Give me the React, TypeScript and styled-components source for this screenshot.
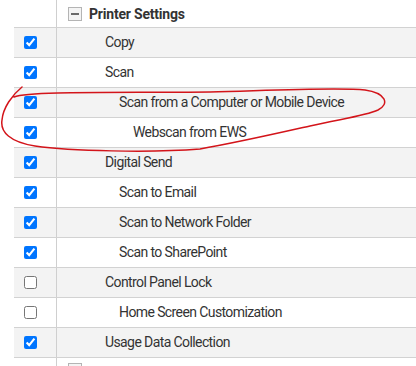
import React from "react";
import styled, { createGlobalStyle } from "styled-components";

const GlobalStyle = createGlobalStyle`
  html, body {
    margin: 0;
    padding: 0;
    overflow: hidden;
    background: #ffffff;
  }
  body {
    font-family: Roboto, "Liberation Sans", Arial, sans-serif;
    color: #333333;
  }
`;

const Page = styled.div`
  position: relative;
  width: 416px;
  height: 366px;
  overflow: hidden;
`;

const Table = styled.div`
  margin-left: 14px;
  display: flex;
  flex-direction: column;
`;

const Row = styled.div<{ $shade?: boolean; $h?: number }>`
  display: grid;
  grid-template-columns: 43px 1fr;
  height: ${(p) => p.$h ?? 29}px;
  border-bottom: 1px solid #d2d2d2;
  background: ${(p) => (p.$shade ? "#f3f3f3" : "#ffffff")};
`;

const CheckCell = styled.div`
  display: flex;
  align-items: center;
  padding-left: 10px;
  border-right: 1px solid #cfcfcf;
`;

const Check = styled.input`
  width: 13px;
  height: 13px;
  margin: 0;
`;

const LabelCell = styled.div<{ $level: number }>`
  display: flex;
  align-items: center;
  padding-left: ${(p) => 34 + p.$level * 14}px;
  padding-bottom: 1px;
  font-size: 14px;
  letter-spacing: -0.6px;
  white-space: nowrap;
`;

const HeaderCell = styled.div<{ $top?: number }>`
  display: flex;
  align-items: ${(p) => (p.$top !== undefined ? "flex-start" : "center")};
  padding-top: ${(p) => p.$top ?? 0}px;
  padding-left: 11px;
  gap: 7px;
  font-size: 14px;
  font-weight: 700;
  letter-spacing: -0.2px;
  white-space: nowrap;
`;

const ToggleBox = styled.span`
  box-sizing: border-box;
  width: 14px;
  height: 14px;
  border: 1px solid #b4b4b4;
  background: #f4f4f4;
  display: flex;
  align-items: center;
  justify-content: center;
  flex-shrink: 0;
  &::after {
    content: "";
    width: 8px;
    height: 2px;
    background: #6a6a6a;
  }
`;

const Annotation = styled.svg`
  position: absolute;
  left: 0;
  top: 0;
  pointer-events: none;
`;

type Item = { label: string; level: number; checked: boolean };

const items: Item[] = [
  { label: "Copy", level: 1, checked: true },
  { label: "Scan", level: 1, checked: true },
  { label: "Scan from a Computer or Mobile Device", level: 2, checked: true },
  { label: "Webscan from EWS", level: 3, checked: true },
  { label: "Digital Send", level: 1, checked: true },
  { label: "Scan to Email", level: 2, checked: true },
  { label: "Scan to Network Folder", level: 2, checked: true },
  { label: "Scan to SharePoint", level: 2, checked: true },
  { label: "Control Panel Lock", level: 1, checked: false },
  { label: "Home Screen Customization", level: 2, checked: false },
  { label: "Usage Data Collection", level: 1, checked: true },
];

export default function App() {
  return (
    <>
      <GlobalStyle />
      <Page>
        <Table>
          <Row $h={27}>
            <CheckCell />
            <HeaderCell>
              <ToggleBox />
              Printer Settings
            </HeaderCell>
          </Row>
          {items.map((it, i) => (
            <Row key={it.label} $shade={i % 2 === 0}>
              <CheckCell>
                <Check type="checkbox" defaultChecked={it.checked} />
              </CheckCell>
              <LabelCell $level={it.level}>{it.label}</LabelCell>
            </Row>
          ))}
          <Row $h={29}>
            <CheckCell />
            <HeaderCell $top={5}>
              <ToggleBox />
            </HeaderCell>
          </Row>
        </Table>
        <Annotation width="416" height="366" viewBox="0 0 416 366">
          <path
            d="M14 97 C30 91, 120 93, 210 92 C280 90, 340 87, 365 90 C386 93, 390 104, 378 110 C365 116, 340 119, 310 126 C270 135, 235 143, 200 149 C150 153, 70 151, 35 146 C10 142, 0 132, 2 120 C3 108, 12 95, 22 87"
            fill="none"
            stroke="#d3141a"
            strokeWidth="1.5"
            strokeLinecap="round"
            strokeLinejoin="round"
          />
        </Annotation>
      </Page>
    </>
  );
}
